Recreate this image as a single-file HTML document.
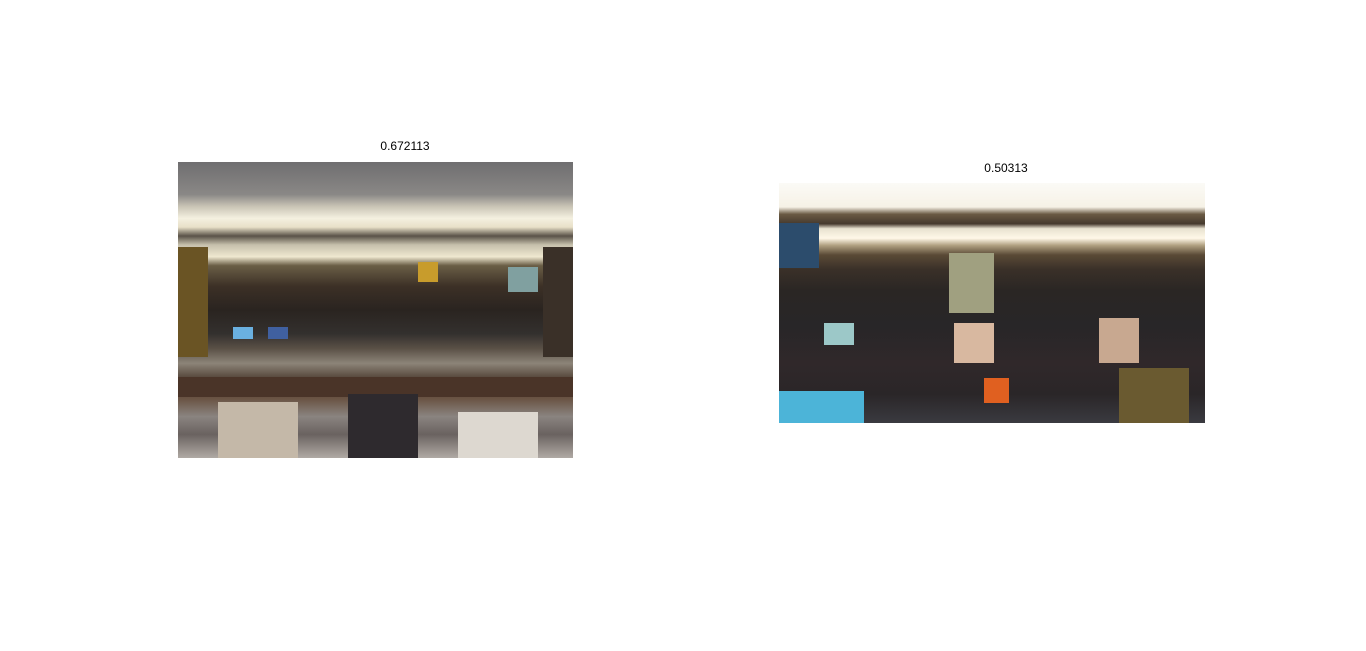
<!DOCTYPE html>
<html><head><meta charset="utf-8"><style>
body{margin:0;background:#fff;width:1366px;height:651px;position:relative;overflow:hidden;font-family:"Liberation Sans",sans-serif}
.t{position:absolute;font-size:12px;color:#000;transform:translateX(-50%)}
.im{position:absolute;overflow:hidden}
.b{position:absolute}
</style></head><body>
<div class="t" style="left:405px;top:139px">0.672113</div>
<div class="t" style="left:1006px;top:161px">0.50313</div>

<div class="im" style="left:178px;top:162px;width:395px;height:296px;background:linear-gradient(180deg,#6f6e70 0%,#8a8886 11%,#c9c4b5 15%,#f4f0e0 19%,#e8e0c8 22%,#5a5248 25%,#c6c0ac 28%,#efe8d0 32%,#6a5e46 35%,#3c3026 42%,#2a2420 50%,#33302e 58%,#5a5046 63%,#8c8478 68%,#4a3a2e 74%,#6a5444 80%,#8a8480 86%,#6a6260 92%,#b0aaa4 100%)">
 <div class="b" style="left:0;top:85px;width:30px;height:110px;background:#6a5424"></div>
 <div class="b" style="left:365px;top:85px;width:30px;height:110px;background:#3a3028"></div>
 <div class="b" style="left:240px;top:100px;width:20px;height:20px;background:#c89c2c"></div>
 <div class="b" style="left:330px;top:105px;width:30px;height:25px;background:#80a0a0"></div>
 <div class="b" style="left:55px;top:165px;width:20px;height:12px;background:#6ab0e0"></div>
 <div class="b" style="left:90px;top:165px;width:20px;height:12px;background:#4060a0"></div>
 <div class="b" style="left:0;top:215px;width:395px;height:20px;background:#4a3428"></div>
 <div class="b" style="left:40px;top:240px;width:80px;height:56px;background:#c4b8a8"></div>
 <div class="b" style="left:170px;top:232px;width:70px;height:64px;background:#2e2a2e"></div>
 <div class="b" style="left:280px;top:250px;width:80px;height:46px;background:#ddd8d0"></div>
</div>

<div class="im" style="left:779px;top:183px;width:426px;height:240px;background:linear-gradient(180deg,#fbfaf6 0%,#f6f2e6 10%,#6a5a44 13%,#463a2e 17%,#e8e2d0 19%,#fff8e8 23%,#b0a080 26%,#5a4a36 30%,#3a3028 36%,#2a2624 45%,#282628 60%,#30282a 75%,#2a2628 88%,#3a3a40 100%)">
 <div class="b" style="left:0;top:40px;width:40px;height:45px;background:#2c4c6c"></div>
 <div class="b" style="left:45px;top:140px;width:30px;height:22px;background:#9cc8c8"></div>
 <div class="b" style="left:0;top:208px;width:85px;height:32px;background:#4cb4d8"></div>
 <div class="b" style="left:175px;top:140px;width:40px;height:40px;background:#d8b8a0"></div>
 <div class="b" style="left:320px;top:135px;width:40px;height:45px;background:#c8a890"></div>
 <div class="b" style="left:340px;top:185px;width:70px;height:55px;background:#6a5a30"></div>
 <div class="b" style="left:205px;top:195px;width:25px;height:25px;background:#e06020"></div>
 <div class="b" style="left:170px;top:70px;width:45px;height:60px;background:#a0a080"></div>
</div>
</body></html>
